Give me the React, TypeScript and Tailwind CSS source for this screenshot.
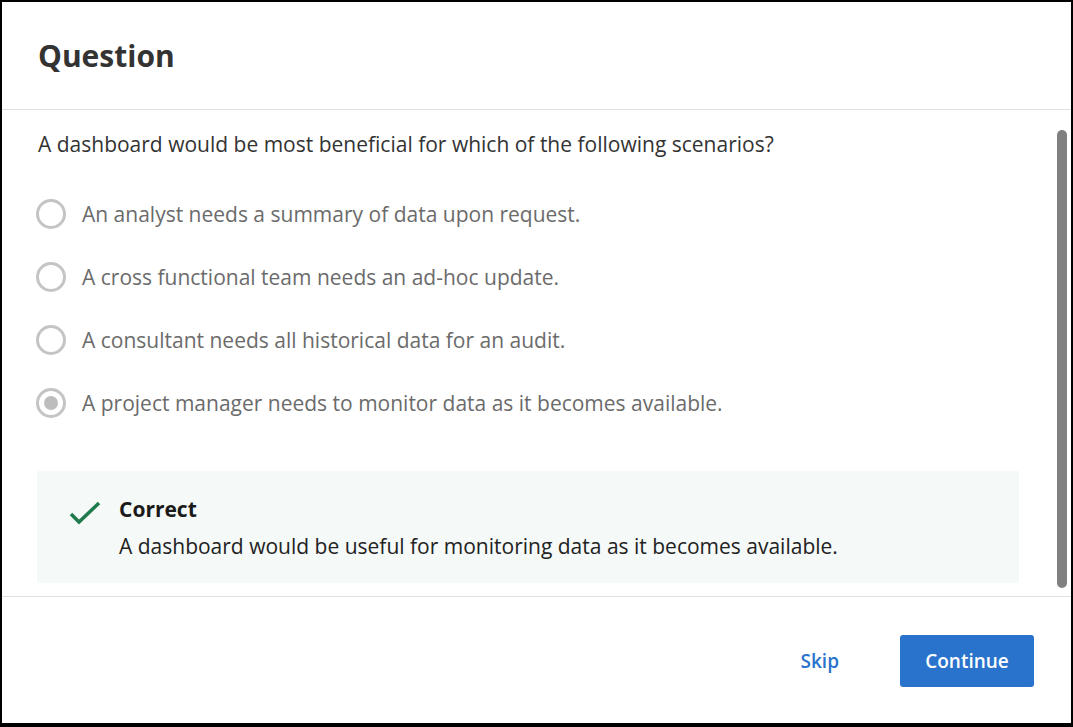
import React from "react";

const options = [
  "An analyst needs a summary of data upon request.",
  "A cross functional team needs an ad-hoc update.",
  "A consultant needs all historical data for an audit.",
  "A project manager needs to monitor data as it becomes available.",
];

function Radio({ checked }: { checked: boolean }) {
  return (
    <span className="w-[30px] h-[30px] rounded-full border-[3px] border-[#c4c4c4] bg-white grid place-items-center shrink-0">
      {checked && <span className="w-[14px] h-[14px] rounded-full bg-[#bdbdbd]" />}
    </span>
  );
}

export default function App() {
  const selected = 3;

  return (
    <div
      className="w-[1073px] h-[727px] bg-white border-black border-t-2 border-l-2 border-r-2 border-b-4 flex flex-col text-[#333]"
      style={{ fontFamily: '"Open Sans", "Noto Sans", sans-serif' }}
    >
      <div className="h-[108px] shrink-0 flex items-center px-[36px] border-b border-[#e0e0e0]">
        <h1 className="text-[30px] leading-[40px] font-bold text-[#333] pt-[1px]">Question</h1>
      </div>

      <div className="relative flex-1 min-h-0 pl-[35px] pr-[52px] pt-[20px] border-b border-[#e0e0e0]">
        <p className="text-[21px] leading-[28px] pl-[1px]">
          A dashboard would be most beneficial for which of the following scenarios?
        </p>

        <div className="mt-[24px] flex flex-col -ml-[1px]">
          {options.map((opt, i) => (
            <label key={i} className="h-[63px] flex items-center gap-[16px] cursor-pointer">
              <Radio checked={i === selected} />
              <span className="text-[21px] leading-[28px] text-[#6b6b6b]">{opt}</span>
            </label>
          ))}
        </div>

        <div className="mt-[37px] h-[112px] bg-[#f5f9f7] flex pt-[24px] pl-[31px]">
          <svg width="34" height="28" viewBox="0 0 34 28" className="shrink-0 mt-[4px]">
            <path d="M3 15 L11 23 L31 4" fill="none" stroke="#1f7a4d" strokeWidth="3.5" />
          </svg>
          <div className="ml-[17px]">
            <div className="text-[21px] leading-[28px] font-bold text-[#1a1a1a]">Correct</div>
            <div className="text-[21px] leading-[28px] mt-[9px] text-[#222]">
              A dashboard would be useful for monitoring data as it becomes available.
            </div>
          </div>
        </div>

        {/* scrollbar thumb */}
        <div className="absolute right-[4px] top-[20px] bottom-[8px] w-[10px] rounded-full bg-[#808080]" />
      </div>

      <div className="flex-1 max-h-[126px] shrink-0 flex items-center justify-end pr-[37px] pt-[2px]">
        <button className="text-[19px] font-semibold text-[#2a73cc] px-[16px] py-[10px] mr-[45px]">Skip</button>
        <button className="w-[134px] h-[52px] rounded-[3px] bg-[#2a73cc] text-white text-[19px] font-semibold">
          Continue
        </button>
      </div>
    </div>
  );
}
